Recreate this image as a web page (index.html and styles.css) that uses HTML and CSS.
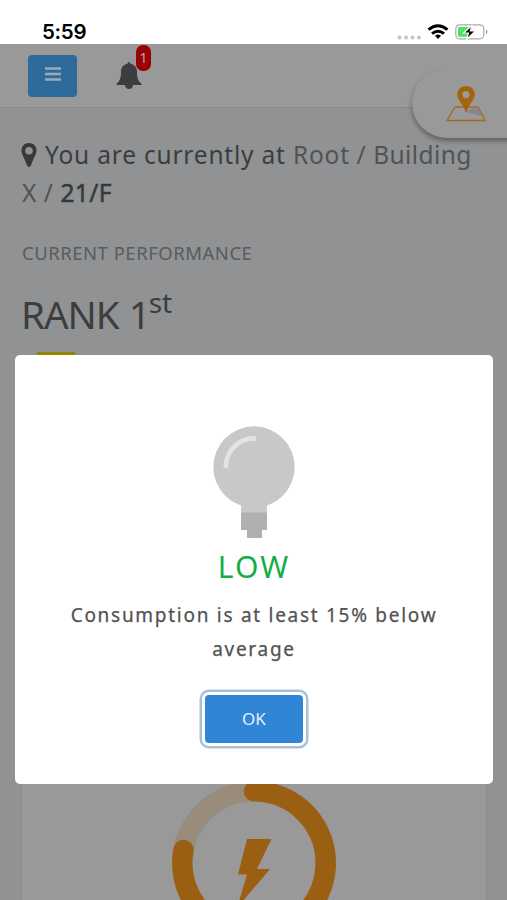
FILE: index.html
```html
<!DOCTYPE html>
<html lang="en">
<head>
<meta charset="utf-8">
<meta name="viewport" content="width=device-width">
<title>Energy performance</title>
<link rel="stylesheet" href="styles.css">
</head>
<body>
<div class="status">
  <span class="time">5:59</span>
  <svg class="status-icons" width="94" height="22" viewBox="0 0 94 22">
    <g fill="#c4c4c4"><circle cx="4.500" cy="15.500" r="2"/><circle cx="11" cy="15.500" r="2"/><circle cx="17.500" cy="15.500" r="2"/><circle cx="24" cy="15.500" r="2"/></g>
    <g fill="none" stroke="#000" stroke-width="3"><path d="M33.500 7.700Q43 -.300 52.500 7.700"/><path d="M37 11.700Q43 6.700 49 11.700"/></g>
    <path d="M40 13.700Q43 11.500 46 13.700L43 17z"/>
    <rect x="60.800" y="2.800" width="28" height="14" rx="4" fill="#fff" stroke="#aaa" stroke-width="1.200"/>
    <rect x="63" y="5" width="11.500" height="9.800" rx="1.500" fill="#4ce06c"/>
    <path d="M91 7.500q3 2.300 0 4.700z" fill="#999"/>
    <path d="M77.500 3L68.500 11h5l-2 6.500L80.500 9h-5.200z" stroke="#fff" stroke-width="1.200"/>
  </svg>
</div>
<main class="screen">
  <header class="bar">
    <button class="menu" aria-label="Menu"><svg width="16" height="14" viewBox="0 0 16 14"><path d="M0 1.500h16M0 7h16M0 12.500h16" stroke="#9eaab4" stroke-width="2.600"/></svg></button>
    <div class="alerts">
      <svg width="26" height="28" viewBox="0 0 26 28"><path fill="#3a3e41" d="M13 0c1 0 1.400.700 1.400 1.800 4 .700 6.600 3.500 6.600 8.200 0 6 1 9 4.300 11.300V23H17c-.3 2.500-1.700 4-4 4s-3.700-1.500-4-4H.7v-1.700C4 19 5 16 5 10c0-4.700 2.600-7.500 6.600-8.200C11.600.7 12 0 13 0z"/></svg>
      <span class="badge">1</span>
    </div>
  </header>
  <div class="map-tab"><svg width="42" height="37" viewBox="0 0 42 37"><path d="M10 21h23l7.300 13.500H2z" fill="#999" stroke="#a5691b" stroke-width="1.300"/><path d="M21 26l8-4.500h4l4 9z" fill="#85878d"/><path fill="#a5640b" fill-rule="evenodd" d="M21 0c5.300 0 8.800 4 8.800 8.700C29.800 14 23.500 18 21.500 26h-1C19 18 12.200 14 12.200 8.700 12.200 4 15.700 0 21 0zm0 5a3.600 3.600 0 100 7.200A3.600 3.600 0 0021 5z"/></svg></div>
  <section class="content">
    <p class="place"><svg class="pin" width="16" height="24" viewBox="0 0 16 24"><path fill="#363839" fill-rule="evenodd" d="M8 0c4.500 0 7.500 3.300 7.500 7.600 0 3.200-1.700 5-5.300 14.200Q9.500 24 8 24t-2.200-2.200C2.200 12.600.5 10.800.5 7.600.5 3.300 3.500 0 8 0zm0 4a3.800 3.800 0 100 7.600A3.800 3.800 0 008 4z"/></svg><span class="here">You are currently at</span> <span class="crumb">Root</span> <span class="slash">/</span> <span class="crumb last">Building</span><br><span class="crumb">X</span> <span class="slash">/</span> <b>21/F</b></p>
    <h2>CURRENT PERFORMANCE</h2>
    <h1>RANK 1<sup>st</sup></h1>
    <div class="medal"></div>
    <div class="card">
      <svg width="164" height="164" viewBox="0 0 164 164"><g fill="none" stroke-width="20.500"><circle cx="82" cy="82" r="71.700" stroke="#9a8c7c"/><path d="M82 10.300A71.700 71.700 0 1 1 11.500 69" stroke="#9b5f14" stroke-linecap="round"/></g><path fill="#9b5f14" d="M75 58h24.500L85 88h13l-33 39 10-33.500h-9z"/></svg>
    </div>
  </section>
</main>
<div class="dialog" role="dialog">
  <svg width="82" height="112" viewBox="0 0 82 112"><circle cx="41" cy="41" r="40.700" fill="#c8c8c8"/><path d="M28 75h26v12H28z" fill="#c8c8c8"/><path d="M28 86.500h26V104h-5v8H34v-8h-6z" fill="#b0b0b0"/><path d="M13 42A28 28 0 0 1 43 12.500" fill="none" stroke="#e3e3e3" stroke-width="4.800"/></svg>
  <h3>LOW</h3>
  <p>Consumption is at least 15% below average</p>
  <button class="ok">OK</button>
</div>
</body>
</html>
```
FILE: styles.css
```css
* { box-sizing: border-box; }
body { margin: 0; height: 900px; overflow: hidden; background: #fff; font-family: "Noto Sans", sans-serif; display: flex; flex-direction: column; position: relative; }
h1, h2, h3, p { margin: 0; font-weight: 400; }
button { border: 0; padding: 0; font-family: inherit; }
.status { height: 44px; flex: none; display: flex; justify-content: space-between; padding: 0 18px 0 42px; }
.time { font: 600 20.500px/24px Inter, sans-serif; letter-spacing: -.3px; margin-top: 20px; }
.status-icons { margin-top: 22px; }
.screen { flex: none; height: 856px; background: #909294; position: relative; overflow: hidden; }
.bar { height: 64px; background: #999; border-bottom: 1px solid #858a8c; display: flex; align-items: flex-start; padding: 11px 0 0 28px; }
.menu { width: 49px; height: 42px; border-radius: 4px; background: #2e6b9c; display: flex; justify-content: center; padding-top: 12px; }
.alerts { position: relative; margin: 7px 0 0 39px; height: 28px; }
.badge { position: absolute; left: 20px; top: -17px; width: 15px; height: 26px; border-radius: 7px; background: #9b0006; color: #bda8a8; font-size: 14px; line-height: 25px; text-align: center; }
.map-tab { position: absolute; top: 24px; right: -4px; width: 99px; height: 70px; border-radius: 36px 0 0 36px; background: #999; box-shadow: 0 3px 5px rgba(0,0,0,.35); padding: 18px 0 0 33px; clip-path: inset(0 0 -12px -12px); }
.content { padding: 28px 21px 0 22px; }
.place { font-size: 24.500px; line-height: 38px; letter-spacing: .8px; white-space: nowrap; color: #3b3d3e; }
.pin { margin: 0 8px -3px -1px; }
.crumb, .slash { color: #515354; }
.slash { margin: 0 -.5px; }
.last { letter-spacing: .4px; }
.place b { font-weight: 400; -webkit-text-stroke: .5px #363839; color: #363839; letter-spacing: .4px; }
h2 { margin-top: 27px; font-size: 18.500px; line-height: 28px; letter-spacing: .5px; color: #595b5d; }
h1 { margin-top: 23px; font-size: 38.500px; line-height: 48px; letter-spacing: -1px; word-spacing: 1px; margin-left: -1px; color: #3b3d3e; }
sup { font-size: 28px; line-height: 0; vertical-align: 16px; letter-spacing: 0; margin-left: -1px; }
.medal { width: 38px; height: 22px; margin: 14px 0 0 15px; background: #968400; }
.card { width: 466px; height: 560px; margin-top: 57px; margin-left: -1px; padding-top: 349px; background: #999; border: 1px solid #8c8f90; text-align: center; }
.dialog { position: absolute; left: 15px; top: 355px; width: 478px; height: 429px; border-radius: 5px; background: #fff; display: flex; flex-direction: column; align-items: center; padding-top: 71px; text-align: center; }
.dialog svg { flex: none; }
h3 { color: #14ad48; font-size: 30px; line-height: 44px; margin-top: 7px; letter-spacing: 2.200px; }
.dialog p { width: 390px; color: #525252; font-size: 19px; -webkit-text-stroke: .25px #525252; line-height: 34px; margin-top: 9px; letter-spacing: 1.720px; }
.ok { width: 98px; height: 48px; margin-top: 29px; border-radius: 4px; background: #3085d6; color: #e5f0fa; font-size: 17px; padding-bottom: 2px; box-shadow: 0 0 0 3px #fff, 0 0 0 5.500px #a9c0d8; }
```
